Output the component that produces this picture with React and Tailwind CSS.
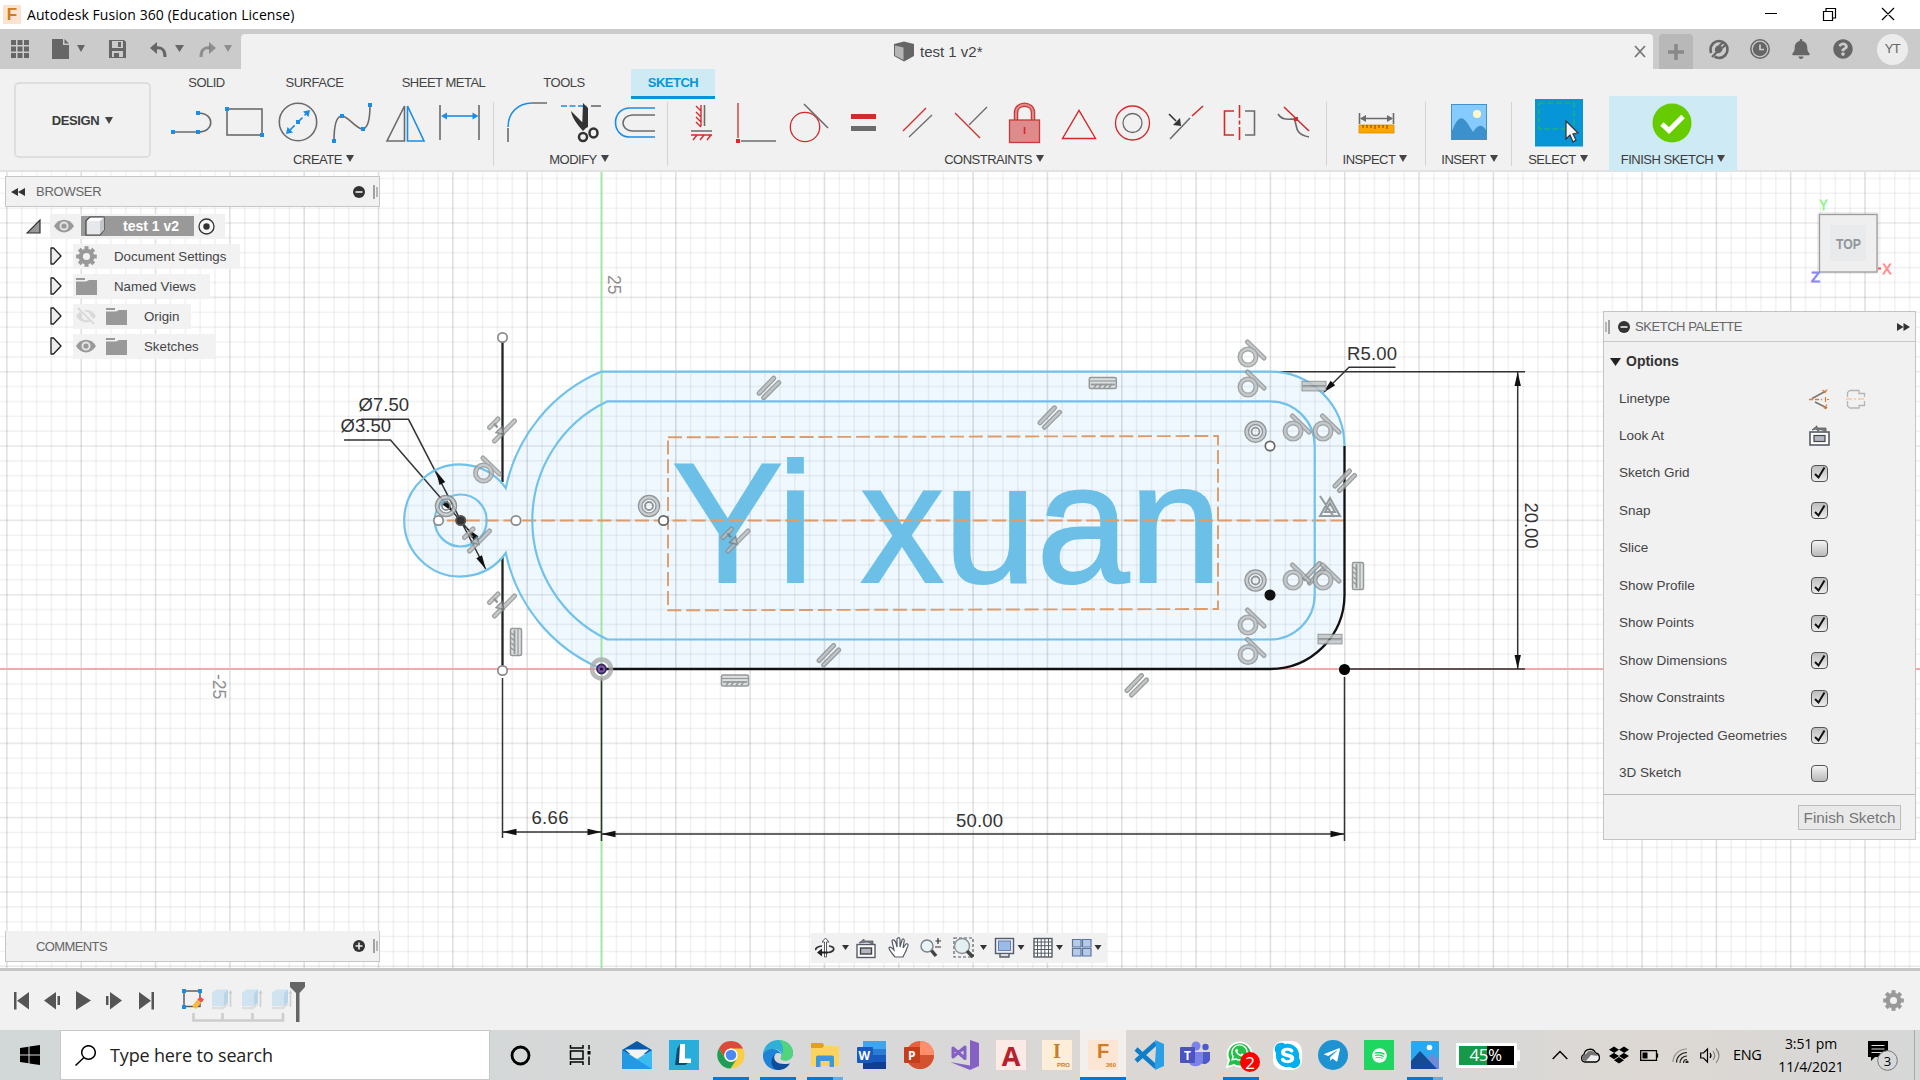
import React from "react";
import { FaDropbox, FaTelegramPlane, FaSpotify, FaWhatsapp, FaBell, FaQuestionCircle, FaSkype } from "react-icons/fa";

const G = "#6b6b6b";
const R = "#d42a2a";
const B = "#1a8de6";

const Caret = ({ className = "text-[#444]" }) => (
  <svg width="8" height="7" viewBox="0 0 8 7" className={className}>
    <path d="M0 0H8L4 7Z" fill="currentColor" />
  </svg>
);

/* A slice of a toolbar strip, drawn in the strip's own coordinates. */
const Strip = ({ x, y, w, h, children, className = "" }) => (
  <svg width={w} height={h} viewBox={`${x} ${y} ${w} ${h}`} fill="none" className={`shrink-0 ${className}`}>
    {children}
  </svg>
);

const Tool = ({ x, w, children }) => (
  <Strip x={x} y={99} w={w} h={48}>
    <g strokeWidth="1.6">{children}</g>
  </Strip>
);

const Dot = ({ x, y, c = B }) => <rect x={x - 2} y={y - 2} width="4" height="4" fill={c} stroke="none" />;

function TitleBar() {
  return (
    <div className="flex h-[29px] items-center bg-white">
      <div className="ml-[3px] flex h-[19px] w-[18px] items-center justify-center bg-[#fbe3cf] font-['Liberation_Sans'] text-[17px] leading-none font-bold text-[#cf7c22]">F</div>
      <span className="ml-[6px] font-['Open_Sans',sans-serif] text-[14px] tracking-[0.07px] text-black">Autodesk Fusion 360 (Education License)</span>
      <Strip x={1760} y={4} w={140} h={21} className="mr-[20px] ml-auto">
        <g stroke="#000" strokeWidth="1.2">
          <path d="M1765 13.5H1777M1823.5 11.5H1832.5V20.5H1823.5ZM1826 11V8.5H1835.5V18H1833M1882 8L1894 20M1894 8L1882 20" />
        </g>
      </Strip>
    </div>
  );
}

function DocTabs() {
  return (
    <div className="flex h-[40px] items-end bg-[#cbcbcb]">
      <Strip x={0} y={29} w={241} h={40}>
        <g fill="#666">
          {[0, 1, 2].map((i) => [0, 1, 2].map((j) => <rect key={`${i}${j}`} x={11 + i * 6.5} y={40 + j * 6.5} width="5" height="5" />))}
          <path d="M52 39H63V45H69V59H52ZM64.5 39L69 43.5H64.5Z" />
          <path d="M77 45H85L81 52ZM175 45H184L179.5 52Z" />
          <path fillRule="evenodd" d="M109 40H124L126 42V58H109ZM112 41V48H123V41ZM112 51V57H123V51ZM118 42H121V47H118ZM114 53H119V57H114Z" />
          <path d="M150 48L157 42V54Z" />
          <path d="M224 45H232L228 52Z" opacity=".6" />
          <path d="M216 48L209 42V54Z" opacity=".6" />
        </g>
        <path d="M156 48C163 47 165 51 165 57" stroke="#666" strokeWidth="3" />
        <path d="M210 48C203 47 201 51 201 57" stroke="#666" strokeWidth="3" opacity=".6" />
      </Strip>
      <div className="flex h-[35px] w-[1412px] items-center rounded-t-[4px] bg-[#f1f1f1]">
        <Strip x={894} y={41} w={20} h={21} className="ml-[653px]">
          <path d="M894 44L904 41.5L914 44V56L904 61.5L894 56Z" fill="#666" />
          <path d="M895 45.5L903.5 47.5V60L895 55.5Z" fill="#b5b5b5" />
        </Strip>
        <span className="mt-[2px] ml-[6px] font-['Liberation_Sans',sans-serif] text-[15px] text-[#444]">test 1 v2*</span>
        <Strip x={1634} y={45} w={12} h={13} className="mr-[7px] ml-auto">
          <path d="M1635 46L1645 57M1645 46L1635 57" stroke="#777" strokeWidth="1.8" />
        </Strip>
      </div>
      <div className="ml-[6px] flex h-[35px] w-[34px] items-center justify-center rounded-t-[4px] bg-[#b8b8b8]">
        <svg width="16" height="16"><path d="M8 0V16M0 8H16" stroke="#888" strokeWidth="3.5" /></svg>
      </div>
      <div className="flex h-[40px] items-center text-[#666]">
        <svg width="20" height="21" viewBox="0 0 20 21" className="ml-[16px]" fill="none">
          <circle cx="10" cy="10.5" r="8.5" stroke="#666" strokeWidth="2.6" strokeDasharray="18 5 50" />
          <path d="M6 12C5 9 8 6 11 6L13.5 9C14 12 11 15 8 14Z" fill="#666" />
          <path d="M3 18L8 13M10.5 6.5L14 3.5M13 9L16.5 6" stroke="#666" strokeWidth="2.2" />
        </svg>
        <svg width="20" height="20" viewBox="0 0 20 20" className="ml-[21px]" fill="none">
          <circle cx="10" cy="10" r="9.2" stroke="#666" strokeWidth="1.5" />
          <circle cx="10" cy="10" r="7.2" fill="#666" />
          <path d="M10 5.5V10.5H14" stroke="#ccc" strokeWidth="1.7" />
        </svg>
        <FaBell className="ml-[21px]" size={20} />
        <FaQuestionCircle className="ml-[22px]" size={20} />
        <div className="ml-[24px] flex h-[31px] w-[31px] items-center justify-center rounded-full bg-[#ececec] font-['Liberation_Sans'] text-[13px] tracking-[-0.5px] text-[#666]">YT</div>
      </div>
    </div>
  );
}

const Label = ({ children, className = "" }) => (
  <div className={`mt-[3px] flex h-[18px] items-center justify-center gap-[4px] font-['Liberation_Sans',sans-serif] text-[13px] tracking-[-0.5px] text-[#3c3c3c] ${className}`}>
    <span className="mt-[1px] whitespace-nowrap">{children}</span>
    <span className="-mt-[2px] flex"><Caret /></span>
  </div>
);

const Sep = () => <div className="mt-[3px] h-[64px] w-px shrink-0 bg-[#d4d4d4]" />;

function CreateGroup() {
  return (
    <div className="w-[339px]">
      <div className="flex pl-[14px]">
        <Tool x={168} w={52}>
          <path d="M173 132H198M198 113C215 113 215 132 198 132" stroke={G} />
          <Dot x={173} y={132} /><Dot x={198} y={132} /><Dot x={198} y={113} />
        </Tool>
        <Tool x={220} w={50}>
          <rect x="227" y="109" width="35" height="26" stroke={G} /><Dot x={227} y={109} /><Dot x={262} y={135} />
        </Tool>
        <Tool x={270} w={56}>
          <circle cx="298" cy="122" r="18.7" stroke={G} />
          <path d="M289 131L307 113" stroke={B} strokeDasharray="8 3" />
          <path d="M286 134L287.5 127L293 132.5ZM310 110L303 111.5L308.5 117Z" fill={B} /><Dot x={298} y={122} />
        </Tool>
        <Tool x={326} w={54}>
          <path d="M334 141C334 127 336 116 342 116C349 117 354 127 362 129C368 129 370 120 370 105" stroke={G} />
          <Dot x={334} y={141} /><Dot x={342} y={116} /><Dot x={363} y={129} /><Dot x={370} y={105} />
        </Tool>
        <Tool x={380} w={52}>
          <path d="M387 141H404.5V106Z" stroke={G} /><path d="M424 141H407.5V106Z" stroke={B} />
        </Tool>
        <Tool x={432} w={58}>
          <path d="M440 105V140M479 105V140" stroke={G} />
          <path d="M445 116H475" stroke={B} /><path d="M441 116L447 112.5V119.5ZM478.5 116L472.5 112.5V119.5Z" fill={B} />
        </Tool>
      </div>
      <Label>CREATE</Label>
    </div>
  );
}

function ModifyGroup() {
  return (
    <div className="w-[173px]">
      <div className="flex pl-[6px]">
        <Tool x={500} w={56}>
          <path d="M508 142V128M532 103H547" stroke={G} /><path d="M508 127C508 113 518 103 532 103" stroke={B} />
        </Tool>
        <Tool x={556} w={54}>
          <path d="M561 106H587" stroke={B} strokeDasharray="6 2.5" /><path d="M591 106H601" stroke={G} />
          <path d="M583 103L588 108L588 127L582 130ZM571 111L587 127L583 131C577 124 572 118 571 111Z" fill="#333" />
          <circle cx="583" cy="137" r="4" stroke="#333" strokeWidth="2.5" /><ellipse cx="593.5" cy="133" rx="4" ry="4.5" stroke="#333" strokeWidth="2.5" />
        </Tool>
        <Tool x={610} w={50}>
          <path d="M655 108H629C611 109 611 136 629 137H655" stroke={B} /><path d="M655 115H632C620 116 620 130 632 131H655" stroke={G} />
        </Tool>
      </div>
      <Label className="pr-[3px]">MODIFY</Label>
    </div>
  );
}

function ConstraintsGroup() {
  return (
    <div className="w-[658px]">
      <div className="flex pl-[12px]">
        <Tool x={680} w={46}>
          <path d="M701 105V126M701 111L696 106M701 117L696 112M701 122L696 117M701 127L696 122M691 135H712M697 135L693 140M704 135L700 140M711 135L707 140" stroke={R} strokeWidth="1.4" />
          <path d="M704.5 105V126M691 131H712" stroke={G} />
        </Tool>
        <Tool x={726} w={56}>
          <path d="M738 103V138" stroke={R} strokeWidth="1.3" /><path d="M741 141H776" stroke={G} /><Dot x={738} y={141} c={R} />
        </Tool>
        <Tool x={782} w={54}>
          <circle cx="805" cy="127" r="14.7" stroke={R} strokeWidth="1.3" /><path d="M804 104L828 128" stroke={G} />
        </Tool>
        <Tool x={836} w={54}>
          <rect x="851" y="114" width="25" height="5" fill={R} /><rect x="851" y="126" width="25" height="5" fill={G} />
        </Tool>
        <Tool x={890} w={54}>
          <path d="M903 131L926 108" stroke={R} strokeWidth="1.3" /><path d="M909 137L932 115" stroke={G} strokeWidth="1.3" />
        </Tool>
        <Tool x={944} w={52}>
          <path d="M955 113L980 138" stroke={R} strokeWidth="1.3" /><path d="M969 125L987 107" stroke={G} strokeWidth="1.3" />
        </Tool>
        <Tool x={996} w={56}>
          <path d="M1016 120V113C1016 102 1033 102 1033 113V120" stroke="#c93a3a" strokeWidth="4.5" />
          <path d="M1016 120V113C1016 102 1033 102 1033 113V120" stroke="#e08a8a" strokeWidth="2" />
          <rect x="1009.5" y="120" width="30" height="22.5" fill="#e08b8b" stroke="#c93a3a" strokeWidth="1.3" /><path d="M1024.5 127V134" stroke={R} />
        </Tool>
        <Tool x={1052} w={54}><path d="M1062.5 138.5H1095.5L1079 110.5Z" stroke={R} strokeWidth="1.4" /></Tool>
        <Tool x={1106} w={54}>
          <circle cx="1132.5" cy="123" r="17" stroke={R} strokeWidth="1.3" /><circle cx="1132.5" cy="123" r="9.5" stroke={G} strokeWidth="1.3" />
        </Tool>
        <Tool x={1160} w={54}>
          <path d="M1170 139L1190 118" stroke={G} /><path d="M1192 116L1203 106" stroke={R} />
          <path d="M1169 114L1176 121" stroke="#333" /><path d="M1181 126L1173 125L1180 118Z" fill="#333" />
        </Tool>
        <Tool x={1214} w={54}>
          <path d="M1234 111H1224.5V135H1234" stroke={R} /><path d="M1245 111H1254.5V135H1245" stroke={G} /><path d="M1239.5 105V140" stroke={R} strokeDasharray="13 2.5 4 2.5" />
        </Tool>
        <Tool x={1268} w={50}>
          <path d="M1284 107L1309 131" stroke={R} /><path d="M1278 114C1282 121 1289 119 1294 119C1298 125 1293 134 1309 137" stroke={G} /><Dot x={1296} y={119} c={R} />
        </Tool>
      </div>
      <Label className="pr-[6px]">CONSTRAINTS</Label>
    </div>
  );
}

function Ribbon() {
  const tabs = [["SOLID", "ml-[34px] w-[37px]"], ["SURFACE", "ml-[60px] w-[59px]"], ["SHEET METAL", "ml-[57px] w-[85px]"], ["TOOLS", "ml-[56px] w-[44px]"]];
  return (
    <div className="flex h-[103px] border-b-2 border-[#e2e2e2] bg-[#f1f1f1] font-['Liberation_Sans',sans-serif]">
      <div className="w-[154px] shrink-0 pt-[13px] pl-[14px]">
        <div className="flex h-[76px] w-[137px] items-center justify-center gap-[6px] rounded-[5px] border-2 border-[#dedede] text-[13px] font-bold tracking-[-0.4px] text-[#3c3c3c]">
          <span className="mt-[1px]">DESIGN</span> <Caret />
        </div>
      </div>
      <div>
        <div className="flex h-[30px] items-center text-[13px] tracking-[-0.5px] text-[#444]">
          {tabs.map(([t, c]) => <span key={t} className={`-mt-[2px] flex justify-center whitespace-nowrap ${c}`}>{t}</span>)}
          <div className="ml-[45px] flex h-[30px] w-[84px] items-center justify-center border-b-[3px] border-[#0696d7] bg-[#cdeaf5] pt-[1px] font-bold text-[#0696d7]">SKETCH</div>
        </div>
        <div className="flex">
          <CreateGroup /><Sep />
          <ModifyGroup /><Sep />
          <ConstraintsGroup /><Sep />
          <div className="w-[98px]">
            <div className="flex justify-center"><Tool x={1351} w={50}>
              <path d="M1359.5 113V124M1393.5 113V124M1361 118.5H1392" stroke={G} /><path d="M1360 118.5L1366 115V122ZM1393 118.5L1387 115V122Z" fill={G} />
              <rect x="1359" y="125" width="35" height="8" fill="#fca800" stroke="#d98c00" strokeWidth=".8" /><path d="M1363 125V128M1367 125V128M1371 125V128M1375 125V129M1379 125V128M1383 125V128M1387 125V129" stroke="#6d4b00" strokeWidth="1" />
            </Tool></div>
            <Label className="pr-[2px]">INSPECT</Label>
          </div><Sep />
          <div className="w-[85px]">
            <div className="flex justify-center"><Tool x={1443} w={50}>
              <rect x="1450.5" y="104.5" width="35" height="35" fill="#86cbff" stroke="#3f93cf" strokeWidth="1" />
              <path d="M1451 131C1457 116 1461 115 1467 124L1472 132C1477 124 1481 124 1485 130V139H1451Z" fill="#3c91cc" /><circle cx="1476" cy="114" r="4" fill="#fff9c8" />
            </Tool></div>
            <Label className="pl-[2px]">INSERT</Label>
          </div><Sep />
          <div className="w-[94px]">
            <div className="flex justify-center"><Tool x={1534} w={50}>
              <rect x="1535" y="99" width="48" height="47.5" fill="#0696d7" /><rect x="1539" y="103" width="35" height="26" stroke="#26b862" strokeWidth="1.2" strokeDasharray="6 2.5" />
              <path d="M1566 121V139L1570 135L1573 142L1576 140L1573 134L1578 133Z" fill="#f4f4f4" stroke="#333" strokeWidth="1.2" />
            </Tool></div>
            <Label className="pr-[2px]">SELECT</Label>
          </div>
          <div className="-mt-[3px] ml-[3px] h-[75px] w-[128px] bg-[#cdeaf5] pt-[3px]">
            <div className="flex justify-center"><Tool x={1648} w={50}>
              <circle cx="1672" cy="123" r="19.5" fill="#66cc00" /><path d="M1662 124L1669 130.5L1683 116.5" stroke="#fff" strokeWidth="5" />
            </Tool></div>
            <Label>FINISH SKETCH</Label>
          </div>
        </div>
      </div>
    </div>
  );
}

/* ---------- sketch canvas ---------- */
const MM = 14.865;
const OX = 601.5;
const OY = 669;

const Capsule = ({ d }) => (
  <g fill="none" strokeLinecap="round">
    <path d={d} stroke="#8b8f90" strokeWidth="5" />
    <path d={d} stroke="#babdbe" strokeWidth="2.4" />
  </g>
);
const Par = ({ x, y }) => (
  <g transform={`translate(${x} ${y})`} opacity=".85"><Capsule d="M-9.5 5.5L5 -9.5" /><Capsule d="M-5 10L10 -5" /></g>
);
const Tan = ({ x, y }) => (
  <g transform={`translate(${x} ${y})`} opacity=".8"><Capsule d="M-.5 -15L16 1" /><Capsule d="M8 0A8 8 0 1 1 -8 0A8 8 0 1 1 8 0" /></g>
);
const Coin = ({ x, y }) => (
  <g transform={`translate(${x} ${y})`} opacity=".8">
    <Capsule d="M-7.5 11L12.5 -9" /><Capsule d="M-12.5 -2.5L-4 -11" />
    <path d="M-8 -6.5L-4.500 -2.500" stroke="#777b7c" strokeWidth="2.4" /><path d="M2 4.500L-6 2.500L0 -3.500Z" fill="#babdbe" stroke="#777b7c" strokeWidth="1.4" />
  </g>
);
const Conc = ({ x, y }) => (
  <g transform={`translate(${x} ${y})`} fill="none" stroke="#7f8384" opacity=".85"><circle r="8.5" stroke="#c3c6c7" strokeWidth="4" /><circle r="10.6" strokeWidth="1.2" /><circle r="7" strokeWidth="1.2" /><circle r="4" strokeWidth="1.8" /></g>
);
const Hor = ({ x, y, r = 0 }) => (
  <g transform={`translate(${x} ${y}) rotate(${r})`} fill="none" stroke="#8b8f90" opacity=".9">
    <rect x="-13.5" y="-5.5" width="27" height="11" rx="1.5" fill="#dadddd" strokeWidth="1.5" /><path d="M-13 -2H13" strokeWidth="1.2" /><path d="M-12 1.5H12" strokeWidth="1.8" /><path d="M-9 5L-6 1M-4 5L-1 1M1 5L4 1M6 5L9 1" strokeWidth="1.5" />
  </g>
);
const Eq = ({ x, y }) => (
  <g transform={`translate(${x} ${y})`} fill="#c3c6c7" stroke="#84888a" opacity=".85"><rect x="-12" y="-4.7" width="24" height="4.2" /><rect x="-12" y=".7" width="24" height="4.2" /></g>
);
const Pt = ({ x, y, f = "#fff", s = "#666" }) => <circle cx={x} cy={y} r="4.7" fill={f} stroke={s} strokeWidth="1.7" />;

/* Arrow head with its tip at (x, y), pointing at angle a (0 = right). */
const Head = ({ x, y, a }) => <path d="M0 0L-14 -3.2V3.2Z" fill="#111" transform={`translate(${x} ${y}) rotate(${a})`} />;

function SketchCanvas() {
  const v = [];
  for (let i = -41; i <= 89; i++) v.push([OX + i * MM, i % 5 === 0]);
  const h = [];
  for (let i = -20; i <= 33; i++) h.push([OY - i * MM, i % 5 === 0]);
  const outline = "M601.5 371.6H1270A74.4 74.4 0 0 1 1344.5 446V595A74.4 74.4 0 0 1 1270 669H601.5A161.6 161.6 0 0 1 505.8 553A56 56 0 1 1 505.8 488A161.6 161.6 0 0 1 601.5 371.6Z";
  return (
    <svg width="1920" height="796" viewBox="0 172 1920 796" className="block bg-white" fill="none" fontFamily="'Liberation Sans', Arial, sans-serif">
      <path d={outline} fill="#eff8fe" />
      <g stroke="#000" strokeWidth="1.6">
        {v.map(([x, m]) => <path key={x} d={`M${x} 172V968`} opacity={m ? 0.12 : 0.05} />)}
        {h.map(([y, m]) => <path key={y} d={`M0 ${y}H1920`} opacity={m ? 0.09 : 0.05} />)}
      </g>
      <path d="M0 669H1920" stroke="#f2a9a9" strokeWidth="1.8" />
      <path d="M601.5 172V968" stroke="#9deb9d" strokeWidth="1.8" />

      <text transform="translate(608 275) rotate(90)" fontSize="17.5" fill="#8f8f8f">25</text>
      <text transform="translate(213 674) rotate(90)" fontSize="17.5" fill="#8f8f8f">-25</text>

      <text x="672" y="581.5" fontSize="170" textLength="550" lengthAdjust="spacingAndGlyphs" fill="#6cc0e8" stroke="#6cc0e8" strokeWidth="2.2">Yi xuan</text>

      <g stroke="#dd9c69" strokeWidth="1.9" strokeDasharray="14 4.8">
        <path d="M668 437.3L1218 436V609L668 610.3Z" /><path d="M447 520.5H1344" />
      </g>

      <g stroke="#111" strokeWidth="2.3">
        <path d="M502.5 342V482M502.5 557V666" stroke="#222" />
        <path d="M1344.5 446V595A74.4 74.4 0 0 1 1270 669H601.5" />
      </g>
      <g stroke="#333" strokeWidth="1.5">
        <path d="M502.5 678V838M601.5 678V841M1344.5 677V841" />
        <path d="M502.5 832H601.5M601.5 834H1344.5M1275 371.8H1525M1345 669H1525M1517.7 372V669" />
        <path d="M361 419.3H408.5L485.7 569M344 440H390.5L478 541M1395.5 367.3H1349L1324 392" />
      </g>
      <Head x={502.5} y={832} a={180} /><Head x={601.5} y={832} a={0} />
      <Head x={601.5} y={834} a={180} /><Head x={1344.5} y={834} a={0} />
      <Head x={1517.7} y={372} a={-90} /><Head x={1517.7} y={669} a={90} />
      <Head x={1323} y={393} a={135} /><Head x={436} y={471} a={-117} /><Head x={485.7} y={569} a={62} />
      <Head x={454} y={513} a={49} /><Head x={467} y={528} a={-131} />

      <g stroke="#70c2ea" strokeWidth="2.2">
        <path d="M1344.5 446A74.4 74.4 0 0 0 1270 371.6H601.5A161.6 161.6 0 0 0 505.8 488A56 56 0 1 0 505.8 553A161.6 161.6 0 0 0 601.5 669" />
        <path d="M607.5 401.3H1270A44.7 44.7 0 0 1 1314.7 446V595A44.7 44.7 0 0 1 1270 639.5H607.5A131.9 131.9 0 0 1 607.5 401.3Z" />
        <circle cx="460.7" cy="520.5" r="26" />
      </g>

      <g fontSize="18.5" fill="#333">
        <text x="531.5" y="824" textLength="37">6.66</text>
        <text x="956" y="826.5" textLength="47">50.00</text>
        <text x="1347" y="360" textLength="50">R5.00</text>
        <text x="358.5" y="411" textLength="50.5">Ø7.50</text>
        <text x="340.5" y="432" textLength="50.5">Ø3.50</text>
        <text transform="translate(1525 502.5) rotate(90)" textLength="46">20.00</text>
      </g>

      {[[768.7, 387.7], [1049.5, 417.3], [828.6, 655], [1136.5, 685], [1344.5, 480.5], [1314.5, 573]].map(([x, y]) => <Par key={x} x={x} y={y} />)}
      {[[1248, 357], [1248, 387], [1293, 431], [1323, 431], [1293, 580], [1323, 580], [1248, 625], [1248, 654.5], [483.5, 473]].map(([x, y]) => <Tan key={`${x}-${y}`} x={x} y={y} />)}
      {[[1255.5, 431.7], [1255.5, 580.5], [446, 506], [649, 506]].map(([x, y]) => <Conc key={`${x}-${y}`} x={x} y={y} />)}
      {[[502, 430], [477, 540], [502, 605], [735.5, 540]].map(([x, y]) => <Coin key={`${x}-${y}`} x={x} y={y} />)}
      <Hor x={1102.8} y={383} /><Hor x={735} y={680.5} /><Hor x={516} y={642} r={90} /><Hor x={1358} y={576} r={90} />
      <Eq x={1314} y={386} /><Eq x={1330} y={639} />
      <g stroke="#84888a" strokeWidth="2" opacity=".85"><path d="M1320 516L1330 498L1340 516ZM1325 512L1330 503L1335 512ZM1320 496L1334 517" /></g>

      <Pt x={502.5} y={337.5} s="#8a8a8a" /><Pt x={502.5} y={670.5} s="#8a8a8a" />
      <Pt x={438.5} y={520.5} s="#8a8a8a" /><Pt x={516} y={520.5} s="#8a8a8a" /><Pt x={663.5} y={520.5} /><Pt x={1270} y={446} />
      <Pt x={1270} y={595} f="#111" s="#111" /><Pt x={1344.5} y={669.5} f="#000" s="#000" /><Pt x={460.7} y={520.5} f="#333" s="#555" />
      <circle cx="601.5" cy="669" r="9.5" stroke="#a9a9a9" strokeWidth="4.5" opacity=".8" />
      <circle cx="601.5" cy="669" r="4.5" fill="#7d58b0" stroke="#3b2b5a" strokeWidth="1.8" /><circle cx="601.5" cy="669" r="1.5" fill="#111" />
    </svg>
  );
}

function ViewCube() {
  return (
    <svg width="90" height="90" viewBox="1808 194 90 90" className="absolute top-[22px] left-[1808px]" fontFamily="'Liberation Sans', Arial, sans-serif">
      <rect x="1817" y="212" width="62" height="62" rx="3" fill="#000" opacity=".07" />
      <rect x="1819.5" y="214.5" width="57.5" height="57.5" fill="#efefef" stroke="#9c9c9c" strokeWidth="1.3" />
      <rect x="1830" y="225" width="36" height="36" fill="#e9eaec" />
      <text x="1836" y="248.5" fontSize="15.5" fontWeight="bold" textLength="25" lengthAdjust="spacingAndGlyphs" fill="#8f969b">TOP</text>
      <g fontSize="15.5" strokeWidth=".8">
        <text x="1819.5" y="210" textLength="8" lengthAdjust="spacingAndGlyphs" fill="#8bf58b" stroke="#8bf58b">Y</text>
        <text x="1882.5" y="274" textLength="9" lengthAdjust="spacingAndGlyphs" fill="#ff8d8d" stroke="#ff8d8d">X</text>
        <text x="1811" y="282" textLength="9" lengthAdjust="spacingAndGlyphs" fill="#8787f5" stroke="#8787f5">Z</text>
      </g>
      <path d="M1878 268.5H1881" stroke="#f55" strokeWidth="2" />
    </svg>
  );
}

const Grip = () => <svg width="5" height="14"><path d="M1 0V14" stroke="#777" strokeWidth="1.3" /><path d="M4 2V12" stroke="#999" strokeWidth="1.3" /></svg>;
const Round = ({ plus }) => (
  <svg width="12" height="12" viewBox="0 0 12 12"><circle cx="6" cy="6" r="6" fill="#333" /><path d={plus ? "M2.5 6H9.5M6 2.5V9.5" : "M2.5 6H9.5"} stroke="#eee" strokeWidth="1.6" /></svg>
);
const Eye = () => (
  <svg width="20" height="14" viewBox="0 0 20 14"><path d="M0 7C5 -1.5 15 -1.5 20 7C15 15.5 5 15.5 0 7Z" fill="#999" /><circle cx="10" cy="7" r="4.5" fill="#e4e4e4" /><circle cx="10" cy="7" r="2.6" fill="#999" /></svg>
);
const EyeOff = () => (
  <svg width="20" height="18" viewBox="0 0 20 18"><path d="M0 9C5 .5 15 .5 20 9C15 17.5 5 17.5 0 9Z" fill="#dadada" /><circle cx="10" cy="9" r="4" fill="#f1f1f1" /><path d="M2 0L20 17" stroke="#f1f1f1" strokeWidth="4" /><path d="M2 1L18 17" stroke="#d4d4d4" strokeWidth="1.5" /></svg>
);
const Folder = () => <svg width="21" height="17" viewBox="0 0 21 17"><path d="M0 0H9V2H0ZM0 3.5H10L13 2H21V17H0Z" fill="#999" /></svg>;
const Gear = ({ size = 21 }) => (
  <svg width={size} height={size} viewBox="-11 -11 22 22" fill="none" stroke="#999">
    <circle r="6" strokeWidth="4.5" />
    {[0, 45, 90, 135, 180, 225, 270, 315].map((a) => <path key={a} d="M0 -7.5V-10.8" strokeWidth="4.2" transform={`rotate(${a})`} />)}
  </svg>
);

const Row = ({ icon, eye, text, w }) => (
  <div className="flex h-[30px] items-center pl-[45px]">
    <svg width="12" height="18" viewBox="0 0 12 18"><path d="M1 1H3.5L11 9L3.5 17H1Z" fill="#eee" stroke="#222" strokeWidth="1.3" strokeLinejoin="round" /></svg>
    <div className={`ml-[11px] flex h-[25px] items-center bg-[#f1f1f1]/95 pl-[3px] text-[#444] ${w}`}>
      {eye && <span className="mr-[10px] flex w-[20px] justify-center">{eye}</span>}
      {icon}
      <span className="mt-[1px] ml-[17px] whitespace-nowrap">{text}</span>
    </div>
  </div>
);

function Browser() {
  return (
    <div className="absolute top-[4px] left-[5px] w-[375px] font-['Liberation_Sans',sans-serif] text-[13.3px]">
      <div className="flex h-[31px] items-center border border-[#c6c6c6] bg-[#f1f1f1] pr-px pl-[5px]">
        <svg width="14" height="8"><path d="M7 0V8L0 4ZM14 0V8L7 4Z" fill="#333" /></svg>
        <span className="ml-[11px] text-[13px] tracking-[-0.25px] text-[#666]">BROWSER</span>
        <span className="mr-[8px] ml-auto flex"><Round /></span><Grip />
      </div>
      <div className="mt-[4px] flex h-[30px] items-center pl-[21px]">
        <svg width="15" height="15"><path d="M14 1V14H1Z" fill="#999" stroke="#333" strokeWidth="1.2" /></svg>
        <div className="ml-[9px] flex h-[25px] w-[175px] items-center bg-[#f1f1f1] pl-[4px]">
          <Eye />
          <div className="ml-[7px] flex h-[20px] w-[113px] items-center bg-[#999] pl-[4px]">
            <svg width="20" height="20" viewBox="0 0 20 20"><path d="M1 5L5 1H19V14L15 19H1Z" fill="#e6e8ec" stroke="#444" strokeWidth="1.2" strokeLinejoin="round" /><path d="M15 5V18L19 14V1Z" fill="#c3c6cc" /><path d="M2 5L5 2H18L15 5Z" fill="#fff" /></svg>
            <span className="ml-[18px] text-[14px] font-bold whitespace-nowrap text-white">test 1 v2</span>
          </div>
          <svg width="17" height="17" className="ml-[4px]"><circle cx="8.5" cy="8.5" r="7.5" fill="#f6f6f6" stroke="#333" strokeWidth="1.3" /><circle cx="8.5" cy="8.5" r="3.2" fill="#333" /></svg>
        </div>
      </div>
      <Row icon={<Gear />} text="Document Settings" w="w-[167px]" />
      <Row icon={<Folder />} text="Named Views" w="w-[137px]" />
      <Row eye={<EyeOff />} icon={<Folder />} text="Origin" w="w-[118px]" />
      <Row eye={<Eye />} icon={<Folder />} text="Sketches" w="w-[143px]" />
    </div>
  );
}

const LookAt = () => (
  <svg width="21" height="21" viewBox="0 0 21 21" fill="none"><rect x="1" y="7" width="19" height="13" fill="#fff" stroke="#555b66" strokeWidth="1.6" /><rect x="5" y="10.5" width="11" height="6" fill="#b3b7c3" stroke="#444" strokeWidth="1.2" /><path d="M3 5L8 .8V3H17V6L11 4.5L9 6L7 4Z" fill="#7a808a" stroke="#555" strokeWidth=".8" /></svg>
);

const Check = ({ on }) => (
  <div className={`flex h-[17px] w-[17px] items-center justify-center rounded-[4px] border-[1.5px] border-[#555] bg-gradient-to-b ${on ? "from-[#bdbdbd] to-[#ececec]" : "from-[#f4f4f4] to-[#b9b9b9]"}`}>
    {on && <svg width="14" height="14" viewBox="0 0 14 14"><path d="M2 8L5.5 11.5L11.5 1.5" stroke="#111" strokeWidth="2" fill="none" /></svg>}
  </div>
);

function Palette() {
  const rows = [["Sketch Grid", true], ["Snap", true], ["Slice", false], ["Show Profile", true], ["Show Points", true], ["Show Dimensions", true], ["Show Constraints", true], ["Show Projected Geometries", true], ["3D Sketch", false]];
  return (
    <div className="absolute top-[139px] left-[1603px] h-[529px] w-[313px] border border-[#c4c4c4] bg-[#f1f1f1] font-['Liberation_Sans',sans-serif] text-[13.5px] text-[#444]">
      <div className="flex h-[30px] items-center border-b border-[#c8c8c8] pr-[5px] pl-px">
        <span className="flex rotate-180"><Grip /></span>
        <span className="ml-[8px] flex"><Round /></span>
        <span className="ml-[5px] text-[13px] tracking-[-0.45px] text-[#666]">SKETCH PALETTE</span>
        <svg width="13" height="8" className="ml-auto"><path d="M0 0V8L6.5 4ZM6.5 0V8L13 4Z" fill="#333" /></svg>
      </div>
      <div className="flex h-[39px] items-center pl-[6px] text-[14px] font-bold text-[#333]">
        <svg width="11" height="8" className="mr-[5px]"><path d="M0 0H11L5.5 8Z" fill="#222" /></svg>Options
      </div>
      <div className="flex h-[36px] items-center pl-[15px]">
        <span className="w-[190px]">Linetype</span>
        <svg width="20" height="21" viewBox="0 0 20 21" fill="none"><path d="M3 9.5L17 2M6 13L18 19" stroke="#777" strokeWidth="1.6" /><path d="M0 10.5H13" stroke="#ea7a25" strokeWidth="1.5" strokeDasharray="4 2" /><path d="M13.5 1L16.5 4M18 0.5L15.500 4M16.500 8V13M14 17L17 20M18 15.500L15 19.500M18 10.500H20" stroke="#ea7a25" strokeWidth="1.2" /></svg>
        <svg width="20" height="21" viewBox="0 0 20 21" className="ml-[17px]" fill="none"><path d="M1.5 8V3.5L4 1.5H13V4.5H18.5V8M1.5 12V17L4 19H13V16.5H18.5V12" stroke="#b5b5b5" strokeWidth="1.3" /><path d="M0 10H20" stroke="#f3c9a8" strokeWidth="1.5" strokeDasharray="6 2 2 2" /></svg>
      </div>
      <div className="flex h-[37.5px] items-center pl-[15px]"><span className="w-[190px]">Look At</span><LookAt /></div>
      {rows.map(([t, on]) => (
        <div key={t} className="flex h-[37.5px] items-center pl-[15px]">
          <span className="w-[192px] whitespace-nowrap">{t}</span>
          <Check on={on} />
        </div>
      ))}
      <div className="mt-[2px] flex h-[46px] items-center justify-end border-t border-[#b9b9b9] pr-[14px]">
        <div className="flex h-[25px] w-[103px] items-center justify-center border border-[#bcbcbc] bg-[#e9e9e9] pt-[2px] text-[15.300px] text-[#777]">Finish Sketch</div>
      </div>
    </div>
  );
}

function NavBar() {
  return (
    <div className="absolute top-[761px] left-[811px] h-[30px] w-[296px] bg-[#f1f1f1]">
      <Strip x={811} y={933} w={296} h={30}>
        <g fill="#333"><path d="M842 945H849L845.5 950ZM980 945H987L983.5 950ZM1017.5 945H1024.5L1021 950ZM1056 945H1063L1059.5 950ZM1094.5 945H1101.5L1098 950Z" /></g>
        <g stroke="#555b66" strokeWidth="1.4">
          <path d="M824.5 942V957H826.5V942H829L825.5 938L822 942Z" fill="#fff" strokeWidth="1" />
          <path d="M828 952.500C835 951.500 836 947 829 946M822 946C818 946.500 815 948 816 950" stroke="#333" strokeWidth="1.7" /><path d="M817 952.500L822 948.500V951.500H828V953.500H822V956.500Z" fill="#222" stroke="none" />
          <rect x="857" y="944.5" width="18" height="13" fill="#fff" /><rect x="860.5" y="948" width="11" height="6" fill="#b3b7c3" stroke="#444" /><path d="M859 943L864 939V941H873V944L867 942Z" fill="#7a808a" strokeWidth=".8" />
          <path d="M895 957C892 953 889 950 889 948C890 946 892 948 894 950L892 941C893 939 895 940 896 943L897 947L897 939C898 937 900 937 900 940V947L902 940C903 938 905 939 904 942L903 948L906 944C908 943 909 945 907 948C906 952 904 954 903 957Z" fill="#fff" strokeWidth="1.2" />
          <circle cx="927" cy="946" r="6" fill="#e9f2f5" stroke="#788088" /><path d="M931.500 950.500L936 956" stroke="#444" strokeWidth="3.5" /><path d="M935.5 941H941M938 938V944M935 947H941" strokeWidth="1.2" stroke="#333" />
          <rect x="954" y="938" width="19" height="19" strokeDasharray="3 2" strokeWidth="1.2" /><circle cx="962" cy="946" r="7.5" fill="#e3f0f1" stroke="#8a9298" /><path d="M967 951L973 957" stroke="#444" strokeWidth="3.5" />
          <rect x="995.5" y="938.5" width="18" height="15" fill="#eef" /><rect x="998.5" y="941" width="12" height="9.5" fill="#9bbbe6" stroke="#6680a8" strokeWidth="1" /><path d="M1000 954V957H1009V954" fill="#ddd" />
          <rect x="1034" y="938.5" width="18" height="18.5" fill="#fff" /><path d="M1037.5 939V957M1041.2 939V957M1044.8 939V957M1048.5 939V957M1034 942H1052M1034 945.7H1052M1034 949.5H1052M1034 953.2H1052" strokeWidth="1" />
          <path d="M1072.5 939.5H1081V947H1072.5ZM1082.5 939.5H1091V947H1082.5ZM1072.5 948.5H1081V956H1072.5ZM1082.5 948.5H1091V956H1082.5Z" fill="#b7cbe8" stroke="#5b76a3" strokeWidth="1.2" />
        </g>
      </Strip>
    </div>
  );
}

function Workspace() {
  return (
    <div className="relative h-[796px]">
      <SketchCanvas />
      <Browser />
      <ViewCube />
      <Palette />
      <NavBar />
      <div className="absolute top-[759px] left-[5px] flex h-[31px] w-[375px] items-center border border-t-0 border-[#c6c6c6] bg-[#f1f1f1] pr-px pl-[30px] font-['Liberation_Sans'] text-[13px] tracking-[-0.6px] text-[#666]">
        <span className="mt-[1px]">COMMENTS</span>
        <span className="mr-[8px] ml-auto flex"><Round plus /></span><Grip />
      </div>
    </div>
  );
}

function Timeline() {
  return (
    <div className="flex h-[62px] items-center border-t-[3px] border-[#c6c6c6] bg-[#f1f1f1]">
      <Strip x={0} y={971} w={320} h={59}>
        <g fill="#555">
          <path d="M14 992H16.5V1009.5H14ZM29 992V1009.5L17 1000.7ZM44 1000.5L56 992V1009.5ZM57.5 996H60V1005H57.5ZM76 991V1010L91 1000.5ZM106 996H108.5V1005H106ZM110 992V1009.5L122 1000.5ZM139 992V1009.5L151 1000.7ZM151.5 992H154V1009.5H151.5Z" />
          <path d="M290 982H305V987L299.5 993V1022H296V993L290 987Z" fill="#666" />
        </g>
        <path d="M193.5 1013V1020.5H283V1013M222.5 1013V1020M252.5 1013V1020" stroke="#cdcdcd" strokeWidth="2.6" />
        <rect x="184" y="991" width="16" height="15.5" stroke="#555" strokeWidth="1.4" /><path d="M194 1007.5L201 999" stroke="#f5b944" strokeWidth="5" /><path d="M199.5 1001L202 998" stroke="#ef4d55" strokeWidth="5" />
        <Dot x={184} y={991} /><Dot x={200} y={991} /><Dot x={184} y={1007} />
        {[212, 242, 272].map((x) => (
          <g key={x}>
            <path d={`M${x} ${1008}H${x + 11}L${x + 16} ${1003}`} stroke="#dedede" strokeWidth="2.5" />
            <path d={`M${x} 993L${x + 4} 989.5H${x + 16}V1002L${x + 12} 1006H${x}Z`} fill="#cfe3f1" /><path d={`M${x + 12} 993.5L${x + 16} 989.5V1002L${x + 12} 1006Z`} fill="#b9d5e8" />
            <path d={`M${x + 18.5} 1007V992`} stroke="#d0d0d0" strokeWidth="1.6" /><path d={`M${x + 16.5} 993.5L${x + 18.5} 990L${x + 20.5} 993.5Z`} fill="#ccc" />
          </g>
        ))}
      </Strip>
      <span className="mr-[16px] ml-auto flex"><Gear size={21} /></span>
    </div>
  );
}

/* ---------- taskbar ---------- */
const AppTile = ({ w = "w-[46px]", bar, active, children }) => (
  <div className={`relative flex h-[50px] shrink-0 items-center justify-center ${w} ${active ? "bg-[#f3efed]" : ""}`}>
    {children}
    {bar && <div className={`absolute bottom-0 h-[3px] bg-[#0078d7] ${active ? "w-full" : "w-[36px]"}`}>{bar === 2 && <div className="ml-[26px] h-[3px] w-[10px] bg-[#67abe5]" />}</div>}
  </div>
);
const LetterTile = ({ className, children, sub }) => (
  <div className={`flex h-[30px] w-[30px] flex-col items-center justify-center leading-none font-bold ${className}`}>
    <span className={sub ? "text-[20px] leading-[20px]" : "text-[27px] leading-[27px]"}>{children}</span>
    {sub && <span className="self-end pr-[2px] font-['Liberation_Sans'] text-[6px] leading-[8px]">{sub}</span>}
  </div>
);

function Taskbar() {
  return (
    <div className="flex h-[50px] shrink-0 items-center bg-[linear-gradient(90deg,#d2d8d7_0%,#d8d8d9_45%,#dcd7d3_66%,#d8d8d8_75%,#ddd8d3_86%,#d6d7d7_100%)] font-['Open_Sans',sans-serif] text-black">
      <div className="flex h-full w-[60px] items-center justify-center">
        <svg width="20" height="20" viewBox="0 0 20 20"><path d="M0 3L8.5 1.7V9.5H0ZM9.5 1.5L20 0V9.5H9.5ZM0 10.5H8.5V18.3L0 17ZM9.5 10.5H20V20L9.5 18.5Z" /></svg>
      </div>
      <div className="flex h-full w-[430px] items-center border border-[#c8c8c8] bg-white pl-[14px]">
        <svg width="21" height="21" viewBox="0 0 21 21" fill="none" stroke="#000" strokeWidth="1.5"><circle cx="13.5" cy="7.5" r="6.8" /><path d="M9 12.5L.5 20.5" /></svg>
        <span className="ml-[14px] text-[18px] tracking-[-0.15px] text-[#222]">Type here to search</span>
      </div>
      <div className="flex w-[60px] justify-center"><svg width="21" height="21" viewBox="0 0 21 21"><circle cx="10.5" cy="10.5" r="8.5" fill="none" stroke="#000" strokeWidth="2.8" /></svg></div>
      <div className="flex w-[64px] justify-center pr-[4px]"><svg width="23" height="20" viewBox="0 0 23 20" fill="none" stroke="#000" strokeWidth="1.5"><path d="M1.5 0V3H14V0M1.5 6H14V14H1.5ZM1.5 20V17H14V20M20 0V4.5M20 11.5V20" /><path d="M18.5 6H21.5V9.5H18.5Z" fill="#000" stroke="none" /></svg></div>
      <AppTile><svg width="30" height="28" viewBox="0 0 30 28"><path d="M0 9L15 0L30 9V13H0Z" fill="#0a5aa8" /><path d="M3 8.5H27L15 19Z" fill="#f4f4f4" /><path d="M0 9L15 18L30 9V28H0Z" fill="#3bbcf0" /><path d="M0 9L30 28H0Z" fill="#2299e2" /></svg></AppTile>
      <AppTile w="w-[47px]"><div className="flex h-[30px] w-[30px] items-center justify-center bg-[#29aeda]"><svg width="30" height="30" viewBox="0 0 30 30"><path d="M11 4L8 9L6 25H16L19 23L12 20Z" fill="#0b4a72" /><path d="M11 4H16V18.500H22V23H10Z" fill="#fff" /></svg></div></AppTile>
      <AppTile w="w-[47px]" bar><svg width="28" height="28" viewBox="-14 -14 28 28"><circle r="13.6" fill="#fbcf45" /><path d="M-12.100 -6.500A13.600 13.600 0 0 1 12.100 -6.500H0A7 7 0 0 0 -6.100 3.500Z" fill="#dc4a3e" /><path d="M-12.100 -6.500A13.600 13.600 0 0 0 -.5 13.600L6 3.500A7 7 0 0 1 -6.100 3.500Z" fill="#1b9e58" /><circle r="6.600" fill="#fff" /><circle r="5.300" fill="#4a8af4" /></svg></AppTile>
      <AppTile w="w-[47px]" bar><svg width="30" height="30" viewBox="0 0 30 30">
        <path d="M0 14C1 5 8 0 15 0C25 0 30 7 30 13C30 18 26 21 21 20.500C18 20 17 19 18 17C20 13 16 9 11 9C6 8.500 2 11 0 14Z" fill="#2fb0d8" />
        <path d="M16 0C25 .5 30 7 30 13C30 18 26 21 21 20.500C18 20 17 19 18 17C20 13 22 6 16 0Z" fill="#52d47a" />
        <path d="M0 14C3 8 15 7 18 14C14 11 10 15 11 19C12 23 15 26 18 29.500C8 32 -1 24 0 14Z" fill="#1c83d6" />
        <path d="M12 14C9 20 14 26 27 23.500C24 28 20 30 15 30C8 29 6 20 12 14Z" fill="#0f4c9a" />
      </svg></AppTile>
      <AppTile w="w-[47px]" bar={2}><svg width="28" height="25" viewBox="0 0 28 25"><path d="M0 4H12L14 3H28V23H0Z" fill="#fcd35c" /><path d="M0 1Q0 0 1 0H12L13 3L11 5H0Z" fill="#e0a21b" /><path d="M5 14Q5 12.500 7 12.500H21Q23 12.500 23 14V24H18.500V18H9.500V24H5Z" fill="#4095dd" /></svg></AppTile>
      <AppTile w="w-[47px]"><svg width="30" height="28" viewBox="0 0 30 28" className="font-bold"><rect x="6" width="23" height="28" rx="2" fill="#2b7cd3" /><rect x="6" y="0" width="23" height="8" fill="#41a5ee" /><rect x="6" y="14" width="23" height="7" fill="#185abd" /><rect x="6" y="21" width="23" height="7" fill="#103f91" /><rect x="0" y="6" width="16" height="16" rx="1" fill="#185abd" /><text x="1.5" y="18.5" fontSize="12" fill="#fff">W</text></svg></AppTile>
      <AppTile w="w-[47px]"><svg width="30" height="28" viewBox="0 0 30 28" className="font-bold"><circle cx="16" cy="14" r="14" fill="#e8603d" /><path d="M16 0A14 14 0 0 1 30 14H16Z" fill="#ff8f6b" /><path d="M30 14A14 14 0 0 1 2 14Z" fill="#d35230" /><rect x="0" y="6" width="16" height="16" rx="1" fill="#c43e1c" /><text x="4" y="18.5" fontSize="12" fill="#fff">P</text></svg></AppTile>
      <AppTile><svg width="30" height="30" viewBox="0 0 30 30"><path d="M20 0L29 3V26L20 30L0 22L20 25.500Z" fill="#8661c5" /><path d="M3 8V17L15 7V18.500Z" fill="none" stroke="#8661c5" strokeWidth="3" strokeLinejoin="round" /></svg></AppTile>
      <AppTile><LetterTile className="bg-[#fbeae6] text-[#b8202c]">A</LetterTile></AppTile>
      <AppTile><LetterTile className="bg-[#fdeeda] font-['Liberation_Serif'] text-[#c87e28]" sub="PRO">I</LetterTile></AppTile>
      <AppTile bar active><LetterTile className="bg-[#fce6d3] font-['Liberation_Sans'] text-[#cf7c22]" sub="360">F</LetterTile></AppTile>
      <AppTile><svg width="30" height="30" viewBox="0 0 30 30"><path d="M2 9L22 27M2 21L22 3" stroke="#0f7dc7" strokeWidth="4.5" /><path d="M21 0L30 4V26L21 30V22L22 8Z" fill="#2a9fe5" /></svg></AppTile>
      <AppTile><svg width="30" height="28" viewBox="0 0 30 28" className="font-bold"><circle cx="16" cy="5" r="4.5" fill="#7b83eb" /><circle cx="25.5" cy="6" r="3.2" fill="#5059c9" /><path d="M20 11H30V19A6 6 0 0 1 21 22Z" fill="#5059c9" /><path d="M8 11H23V20A8 8 0 0 1 8 20Z" fill="#7b83eb" /><rect x="0" y="6" width="15" height="16" rx="1" fill="#4b53bc" /><text x="4" y="18.5" fontSize="12" fill="#fff">T</text></svg></AppTile>
      <AppTile bar>
        <svg width="30" height="30" viewBox="0 0 30 30"><path d="M1 27L3 20A12 12 0 1 1 8 25Z" fill="#25c048" stroke="#fff" strokeWidth="1.8" /></svg>
        <FaWhatsapp className="absolute top-[13px] left-[12px] text-white" size={19} />
        <div className="absolute top-[22px] left-[22px] flex h-[20px] w-[20px] items-center justify-center rounded-full bg-[#f00] text-[17px] leading-none text-white">2</div>
      </AppTile>
      <AppTile><FaSkype size={29} className="rounded-[10px] bg-white text-[#00aff0]" /></AppTile>
      <AppTile><div className="flex h-[30px] w-[30px] items-center justify-center rounded-full bg-[#1f93d2]"><FaTelegramPlane size={18} className="mr-[2px] text-white" /></div></AppTile>
      <AppTile><div className="flex h-[30px] w-[30px] items-center justify-center bg-[#1ed760]"><FaSpotify size={15} className="text-white" /></div></AppTile>
      <AppTile bar={2}><svg width="28" height="28" viewBox="0 0 28 28"><rect width="28" height="28" rx="1" fill="#27a8f0" /><path d="M14 20L21 12L28 19V28H14Z" fill="#6a8bd8" /><path d="M0 20L9 10L26 28H0Z" fill="#154a94" /><circle cx="18.5" cy="6.5" r="2.8" fill="#fff" /></svg></AppTile>
      <div className="ml-auto flex h-[50px] w-[472px] shrink-0 items-center">
        <div className="ml-[8px] flex h-[25px] w-[61px] shrink-0 items-center justify-center border-[3px] border-white bg-[linear-gradient(90deg,#169a48_50%,#000_50%)] pr-[2px] text-[17px] tracking-[-0.5px] text-white">45%</div>
        <div className="h-[11px] w-[3px] bg-white" />
        <svg width="16" height="10" viewBox="0 0 16 10" className="ml-[32px]"><path d="M.7 9L8 1.5L15.3 9" fill="none" stroke="#000" strokeWidth="1.4" /></svg>
        <svg width="21" height="15" viewBox="0 0 21 15" className="ml-[12px]"><path d="M4.5 14A4 4 0 0 1 4 6.5A6 6 0 0 1 15.5 5A4.6 4.6 0 0 1 16 14Z" fill="#eee" stroke="#000" strokeWidth="1.3" /><path d="M2 9Q4 5.500 6 6Q9 0 15.500 5L18 8L11 7L6 13Q1 13 2 9Z" fill="#777" /></svg>
        <FaDropbox size={20} className="ml-[8px]" />
        <svg width="19" height="11" viewBox="0 0 19 11" className="ml-[11px]"><path d="M.7 .7H16.5V10.3H.7ZM17.5 3.5V7.5" fill="none" stroke="#000" strokeWidth="1.3" /><rect x="2.5" y="2.5" width="5" height="6" /></svg>
        <svg width="17" height="15" viewBox="0 0 17 15" className="ml-[13px]" fill="none" stroke="#222" strokeWidth="1.2"><path d="M1 14C1 7 7 1 15 1" opacity=".4" /><path d="M4.5 14.5C4.5 9 9 4.5 15 4.5M8 15C8 11 11 8 15 8M11.5 15C11.5 13 13 11.5 15 11.5" /><circle cx="15" cy="14" r="1" fill="#000" /></svg>
        <svg width="21" height="17" viewBox="0 0 21 17" className="ml-[11px]" fill="none" stroke="#000" strokeWidth="1.2"><path d="M.7 6H3.5L7.5 2V15L3.5 11H.7Z" /><path d="M10 6Q12 8.5 10 11" /><path d="M13 4Q16.5 8.5 13 13M16 1.5Q22 8.5 16 16" opacity=".4" /></svg>
        <span className="ml-[12px] w-[29px] text-[14.500px] tracking-[-0.3px]">ENG</span>
        <div className="ml-[12px] flex w-[74px] flex-col items-center text-[14px] leading-[23px] tracking-[-0.1px]"><span>3:51 pm</span><span>11/4/2021</span></div>
        <svg width="32" height="30" viewBox="0 0 32 30" className="mt-[2px] ml-[20px] shrink-0"><path d="M0 0H20V16H7L3 20V16H0Z" /><path d="M3.5 4.5H16.5M3.5 8H16.5M3.5 11.5H16.5" stroke="#ddd" strokeWidth="1.2" /><circle cx="19.5" cy="19.5" r="9.8" fill="#d7d8d9" stroke="#777" /><text x="15.7" y="24.5" fontSize="13">3</text></svg>
        <div className="mr-[5px] ml-auto h-[50px] w-px bg-[#aaa]" />
      </div>
    </div>
  );
}

export default function App() {
  return (
    <div className="flex h-[1080px] w-[1920px] flex-col overflow-hidden bg-[#f1f1f1]">
      <TitleBar />
      <DocTabs />
      <Ribbon />
      <Workspace />
      <Timeline />
      <Taskbar />
    </div>
  );
}
